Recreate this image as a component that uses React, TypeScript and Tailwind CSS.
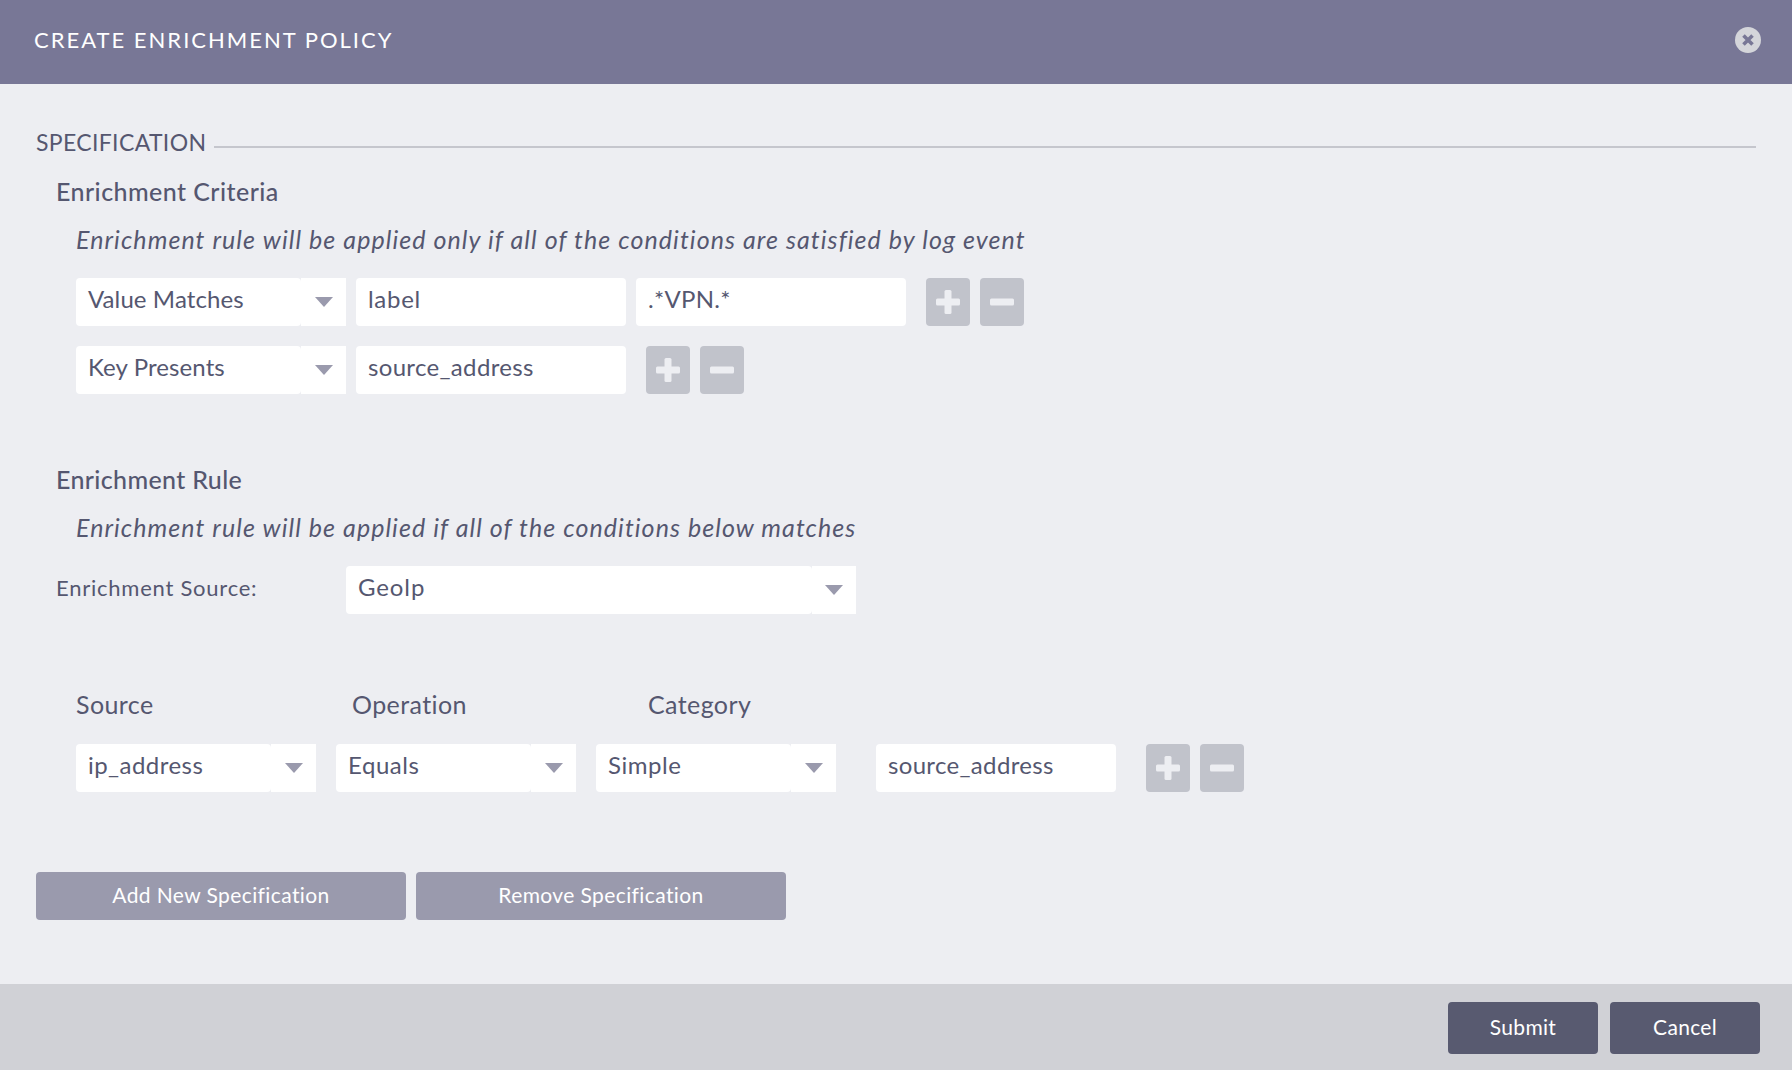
const fontStack = 'font-[Lato,"Open_Sans",sans-serif]'

function Select({ value, width, textWidth, tracking }: { value: string; width: string; textWidth: string; tracking: string }) {
  return (
    <div className={`flex h-12 ${width}`}>
      <div className={`flex h-full items-center rounded-[4px] bg-white pb-[6px] pl-3 text-[24px] text-[#555770] ${textWidth} ${tracking}`}>
        {value}
      </div>
      <div className="flex h-full flex-1 items-center justify-center bg-white pb-px">
        <svg width="18" height="10" viewBox="0 0 18 10">
          <path d="M0 0H18L9 10Z" fill="#9a9aad" />
        </svg>
      </div>
    </div>
  )
}

function TextInput({ value, width, tracking }: { value: string; width: string; tracking: string }) {
  return (
    <div className={`flex h-12 items-center rounded-[4px] bg-white pb-[6px] pl-3 text-[24px] text-[#555770] ${width} ${tracking}`}>
      {value}
    </div>
  )
}

function PlusMinus() {
  return (
    <div className="flex gap-[10px]">
      <button className="flex h-12 w-11 items-center justify-center rounded-[4px] bg-[#c1c3cb]">
        <svg width="24" height="24" viewBox="0 0 24 24" fill="#edeef2">
          <rect x="0" y="8.5" width="24" height="7" rx="1.5" />
          <rect x="8.5" y="0" width="7" height="24" rx="1.5" />
        </svg>
      </button>
      <button className="flex h-12 w-11 items-center justify-center rounded-[4px] bg-[#c1c3cb]">
        <svg width="24" height="24" viewBox="0 0 24 24" fill="#edeef2">
          <rect x="0" y="8.5" width="24" height="7" rx="1.5" />
        </svg>
      </button>
    </div>
  )
}

export default function App() {
  return (
    <div className={`flex h-[1070px] w-[1792px] flex-col overflow-hidden bg-[#edeef2] ${fontStack}`}>
      {/* Header */}
      <header className="flex h-[84px] shrink-0 items-center justify-between bg-[#787796] pb-[5px] pl-[34px] pr-[31px]">
        <h1 className="text-[22px] tracking-[2px] text-white">CREATE ENRICHMENT POLICY</h1>
        <svg width="26" height="26" viewBox="0 0 26 26">
          <circle cx="13" cy="13" r="13" fill="#d4d5da" />
          <path d="M8.5 8.5L17.5 17.5M17.5 8.5L8.5 17.5" stroke="#787796" strokeWidth="3.6" />
        </svg>
      </header>

      {/* Main Content */}
      <main className="flex-1 pl-9 pr-9 pt-[44px] text-[#555770]">
        <div className="flex h-7 items-center">
          <h2 className="text-[23px] leading-7 tracking-[0.35px]">SPECIFICATION</h2>
          <div className="ml-2 mt-[9px] h-[2px] flex-1 bg-[#c5c6cd]" />
        </div>

        <div className="pl-5">
          <h3 className="mt-[21px] h-7 text-[25px] font-medium leading-7 tracking-[0.45px]">Enrichment Criteria</h3>
          <p className="ml-5 mt-5 h-7 text-[25px] italic leading-7 tracking-[1.07px]">
            Enrichment rule will be applied only if all of the conditions are satisfied by log event
          </p>
          <div className="ml-5 mt-[25px] flex">
            <Select value="Value Matches" width="w-[270px]" textWidth="w-[225px]" tracking="tracking-[0.1px]" />
            <TextInput value="label" width="ml-[10px] w-[270px]" tracking="tracking-[0.7px]" />
            <TextInput value=".*VPN.*" width="ml-[10px] w-[270px]" tracking="tracking-[0.3px]" />
            <div className="ml-5">
              <PlusMinus />
            </div>
          </div>
          <div className="ml-5 mt-5 flex">
            <Select value="Key Presents" width="w-[270px]" textWidth="w-[225px]" tracking="tracking-[0.1px]" />
            <TextInput value="source_address" width="ml-[10px] w-[270px]" tracking="tracking-[0.33px]" />
            <div className="ml-5">
              <PlusMinus />
            </div>
          </div>

          <h3 className="mt-[71px] h-7 text-[25px] font-medium leading-7 tracking-[0.35px]">Enrichment Rule</h3>
          <p className="ml-5 mt-5 h-7 text-[25px] italic leading-7 tracking-[1.06px]">
            Enrichment rule will be applied if all of the conditions below matches
          </p>
          <div className="mt-[25px] flex items-center">
            <label className="w-[290px] pb-[6px] text-[22px] tracking-[0.76px]">Enrichment Source:</label>
            <Select value="Geolp" width="w-[510px]" textWidth="w-[466px]" tracking="tracking-[0.9px]" />
          </div>

          <div className="ml-5 mt-[76px] flex h-7 text-[25px] leading-7 tracking-[0.4px]">
            <span className="w-[276px]">Source</span>
            <span className="w-[296px]">Operation</span>
            <span>Category</span>
          </div>
          <div className="ml-5 mt-[26px] flex">
            <Select value="ip_address" width="w-[240px]" textWidth="w-[195px]" tracking="tracking-[0.45px]" />
            <Select value="Equals" width="ml-5 w-[240px]" textWidth="w-[195px]" tracking="tracking-[0.55px]" />
            <Select value="Simple" width="ml-5 w-[240px]" textWidth="w-[195px]" tracking="tracking-[0.55px]" />
            <TextInput value="source_address" width="ml-10 w-[240px]" tracking="tracking-[0.33px]" />
            <div className="ml-[30px]">
              <PlusMinus />
            </div>
          </div>
        </div>

        <div className="mt-20 flex gap-[10px]">
          <button className="h-12 w-[370px] rounded-[4px] bg-[#9a9aad] pb-0.5 text-[21px] tracking-[0.4px] text-white">Add New Specification</button>
          <button className="h-12 w-[370px] rounded-[4px] bg-[#9a9aad] pb-0.5 text-[21px] tracking-[0.4px] text-white">Remove Specification</button>
        </div>
      </main>

      {/* Footer */}
      <footer className="flex h-[86px] shrink-0 items-center justify-end gap-3 bg-[#d0d1d6] pr-8 pt-[2px]">
        <button className="h-[52px] w-[150px] rounded-[4px] bg-[#585a70] pb-0.5 text-[21px] tracking-[0.3px] text-white">Submit</button>
        <button className="h-[52px] w-[150px] rounded-[4px] bg-[#585a70] pb-0.5 text-[21px] tracking-[0.3px] text-white">Cancel</button>
      </footer>
    </div>
  )
}
